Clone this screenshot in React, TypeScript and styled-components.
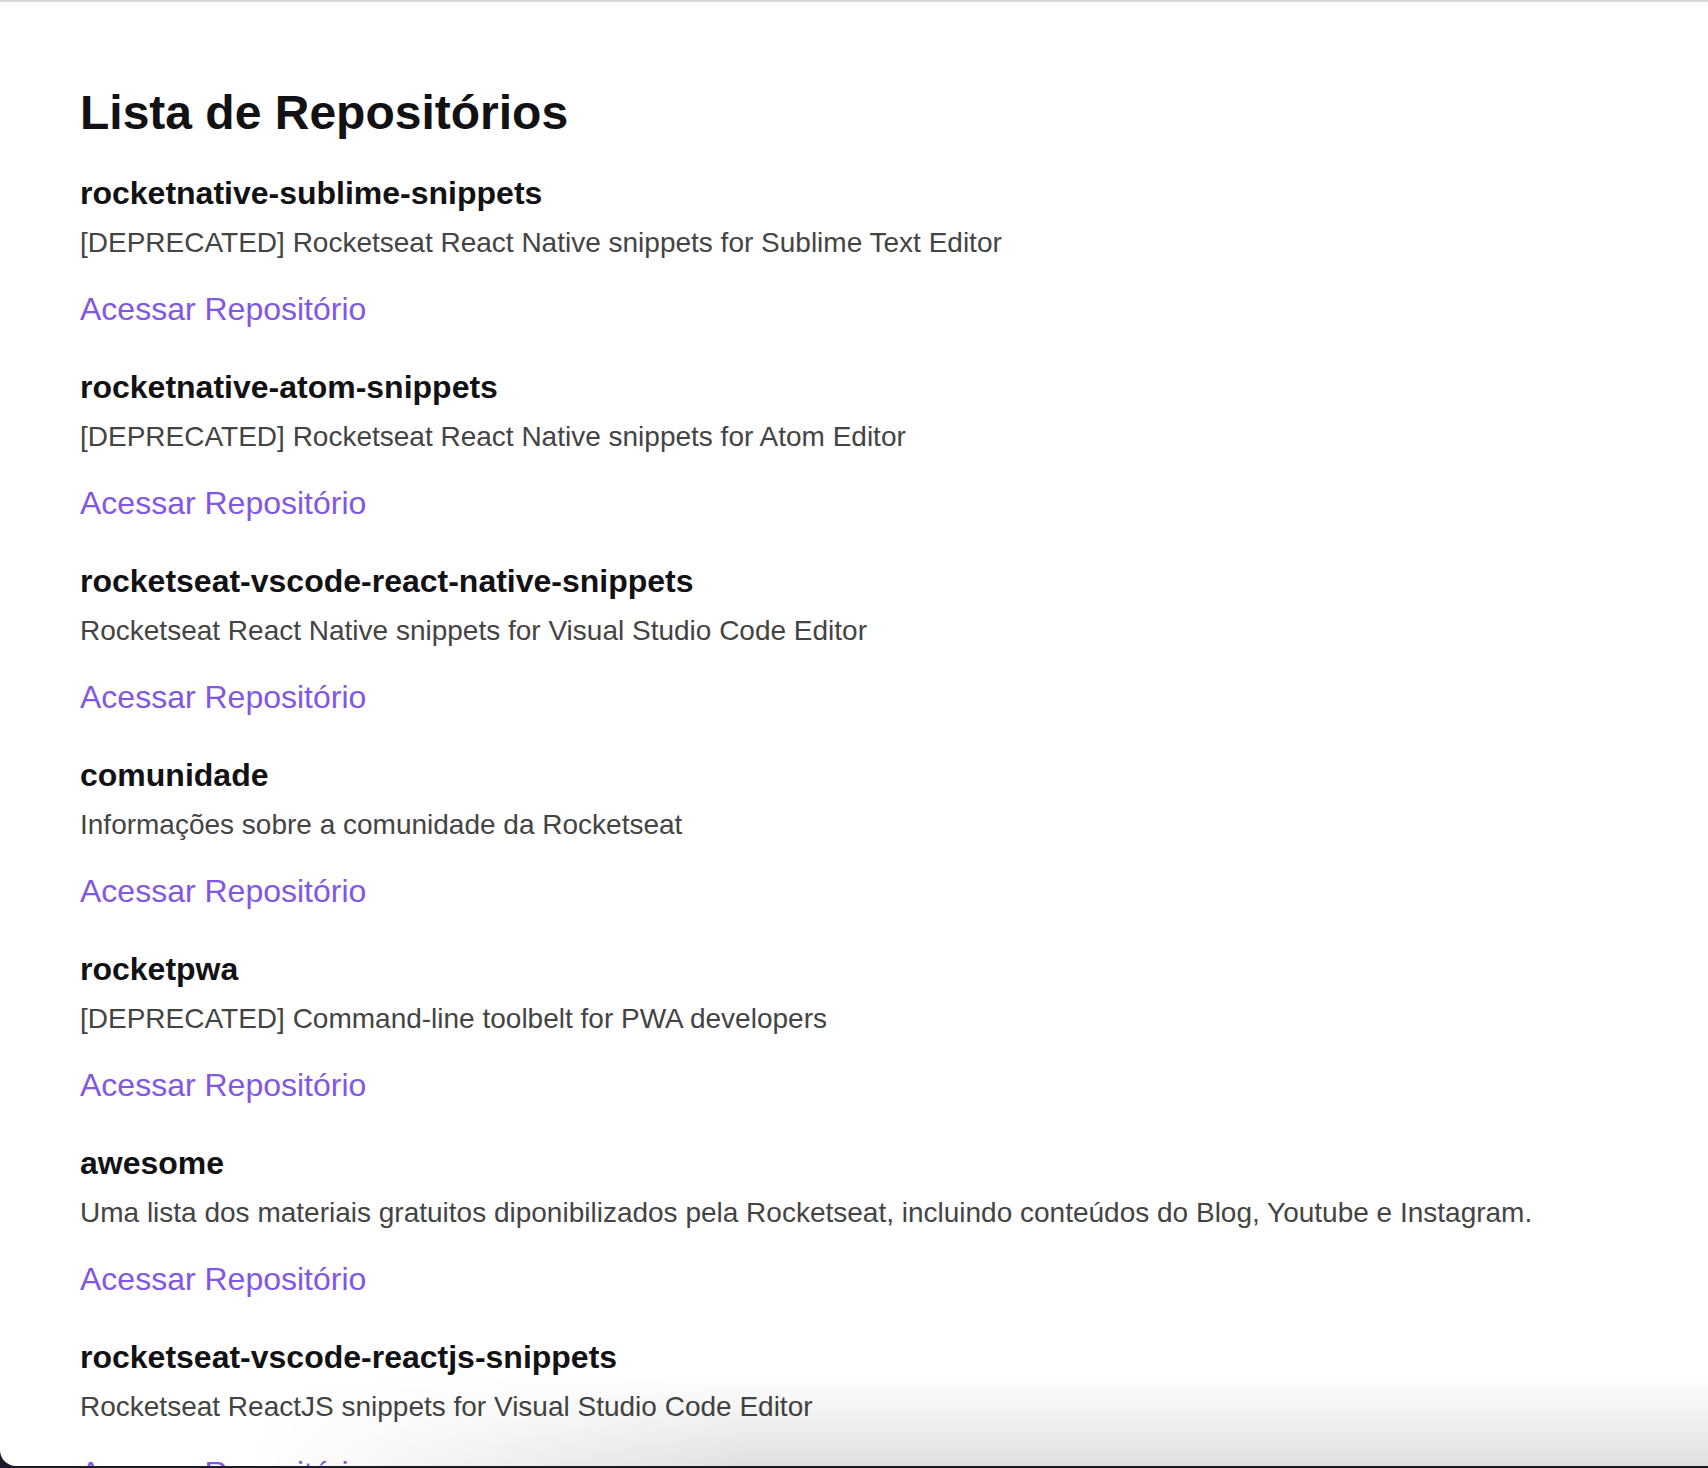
import React from 'react';
import styled, { createGlobalStyle } from 'styled-components';

interface IRepository {
  name: string;
  description: string;
  url: string;
}

const repositories: IRepository[] = [
  {
    name: 'rocketnative-sublime-snippets',
    description:
      '[DEPRECATED] Rocketseat React Native snippets for Sublime Text Editor',
    url: 'https://github.com/Rocketseat/rocketnative-sublime-snippets',
  },
  {
    name: 'rocketnative-atom-snippets',
    description: '[DEPRECATED] Rocketseat React Native snippets for Atom Editor',
    url: 'https://github.com/Rocketseat/rocketnative-atom-snippets',
  },
  {
    name: 'rocketseat-vscode-react-native-snippets',
    description: 'Rocketseat React Native snippets for Visual Studio Code Editor',
    url: 'https://github.com/Rocketseat/rocketseat-vscode-react-native-snippets',
  },
  {
    name: 'comunidade',
    description: 'Informações sobre a comunidade da Rocketseat',
    url: 'https://github.com/Rocketseat/comunidade',
  },
  {
    name: 'rocketpwa',
    description: '[DEPRECATED] Command-line toolbelt for PWA developers',
    url: 'https://github.com/Rocketseat/rocketpwa',
  },
  {
    name: 'awesome',
    description:
      'Uma lista dos materiais gratuitos diponibilizados pela Rocketseat, incluindo conteúdos do Blog, Youtube e Instagram.',
    url: 'https://github.com/Rocketseat/awesome',
  },
  {
    name: 'rocketseat-vscode-reactjs-snippets',
    description: 'Rocketseat ReactJS snippets for Visual Studio Code Editor',
    url: 'https://github.com/Rocketseat/rocketseat-vscode-reactjs-snippets',
  },
  {
    name: 'unform',
    description: 'Easy peasy highly scalable ReactJS & React Native forms!',
    url: 'https://github.com/Rocketseat/unform',
  },
];

function RepositoryItem({ repository }: { repository: IRepository }): JSX.Element {
  return (
    <StyledItem>
      <StyledName>{repository.name}</StyledName>
      <StyledDescription>{repository.description}</StyledDescription>
      <StyledLink href={repository.url}>Acessar Repositório</StyledLink>
    </StyledItem>
  );
}

export default function App(): JSX.Element {
  return (
    <>
      <GlobalStyle />
      <StyledWindow>
        <StyledContent>
          <StyledTitle>Lista de Repositórios</StyledTitle>
          <StyledList>
            {repositories.map((repository) => (
              <RepositoryItem key={repository.name} repository={repository} />
            ))}
          </StyledList>
        </StyledContent>
        <StyledShade />
      </StyledWindow>
    </>
  );
}

const GlobalStyle = createGlobalStyle`
  * {
    box-sizing: border-box;
  }

  body {
    margin: 0;
    background-color: #1b1a26;
    font-family: "Liberation Sans", Arial, Helvetica, sans-serif;
    -webkit-font-smoothing: antialiased;
  }
`;

const StyledWindow = styled.div`
  position: relative;
  height: 1466px;
  overflow: hidden;
  background-color: #fff;
  border-top: 2px solid #d9d9d9;
  border-bottom-left-radius: 16px;
`;

const StyledContent = styled.main`
  padding: 83px 80px 0;
`;

const StyledTitle = styled.h1`
  margin: 0 0 32px;
  font-size: 48px;
  line-height: 56px;
  font-weight: 700;
  color: #121214;
`;

const StyledList = styled.ul`
  display: flex;
  flex-direction: column;
  gap: 38px;
  margin: 0;
  padding: 0;
  list-style: none;
`;

const StyledItem = styled.li`
  display: flex;
  flex-direction: column;
  align-items: flex-start;
`;

const StyledName = styled.strong`
  font-size: 32px;
  line-height: 40px;
  font-weight: 700;
  color: #121214;
`;

const StyledDescription = styled.p`
  margin: 12px 0 0;
  font-size: 28px;
  line-height: 36px;
  color: #444;
`;

const StyledLink = styled.a`
  margin-top: 28px;
  font-size: 32px;
  line-height: 40px;
  color: #8257e5;
  text-decoration: none;

  &:hover {
    text-decoration: underline;
  }
`;

const StyledShade = styled.div`
  position: absolute;
  left: 0;
  right: 0;
  bottom: 0;
  height: 90px;
  pointer-events: none;
  background: linear-gradient(to bottom, rgba(0, 0, 0, 0), rgba(0, 0, 0, 0.12));
  -webkit-mask-image: linear-gradient(to right, transparent 250px, #000 750px);
  mask-image: linear-gradient(to right, transparent 250px, #000 750px);
`;
